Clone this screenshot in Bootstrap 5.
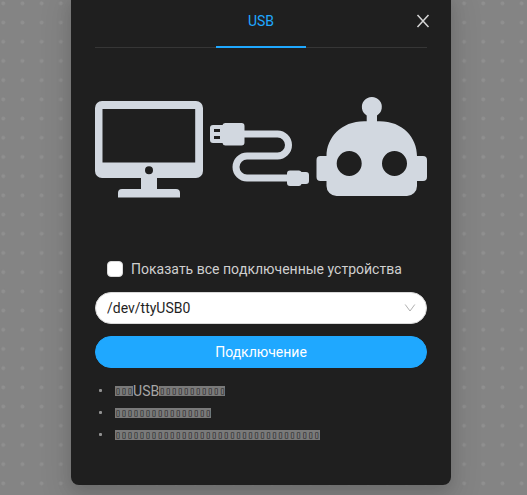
<!DOCTYPE html>
<html lang="ru">
<head>
<meta charset="utf-8">
<meta name="viewport" content="width=device-width, initial-scale=1">
<title>USB</title>
<link href="https://cdn.jsdelivr.net/npm/bootstrap@5.3.0/dist/css/bootstrap.min.css" rel="stylesheet">
<style>
body {
  font-family: Roboto, "Liberation Sans", sans-serif;
  font-size: 14px;
  line-height: 22px;
  text-rendering: optimizeSpeed;
  font-kerning: none;
  color: #cfcfcf;
  background: #848484 url("data:image/svg+xml,%3Csvg xmlns='http://www.w3.org/2000/svg' viewBox='0 0 5 5'%3E%3Cdefs%3E%3Cpattern id='p' width='1' height='1' patternUnits='userSpaceOnUse'%3E%3Ccircle cx='.17' cy='.17' r='.1' fill='%238f8f8f'/%3E%3C/pattern%3E%3C/defs%3E%3Crect width='5' height='5' fill='url(%23p)'/%3E%3C/svg%3E") 0 0 / 96px 96px;
}
.stage { padding-right: 5px; overflow: hidden; min-height: 100vh; }
.dialog-box {
  max-width: 380px;
  margin-top: -7px;
  margin-bottom: 10px;
  padding: 0 24px 39px;
  background: #1f1f1f;
  border-radius: 8px;
  box-shadow: 0 6px 16px rgba(0,0,0,.12), 0 9px 28px 8px rgba(0,0,0,.08);
}
.tab-bar { border-bottom: 1px solid #363636; }
.tab-bar .nav-link {
  padding: 17px 32px 14px;
  margin-bottom: -1px;
  border: 0;
  border-bottom: 2px solid #1fa8ff;
  border-radius: 0;
  background: transparent;
  color: #1fa8ff;
}
.close-btn { top: 19px; right: 20px; line-height: 0; color: #d6d6d6; }
.art { margin-top: 42px; fill: #d2d8e0; }
.options { margin-top: 53px; gap: 12px; }
.form-check-input.show-all { width: 16px; height: 16px; border: 1px solid #d9d9d9; border-radius: 4px; background-color: #fff; }
.port-select {
  height: 32px;
  padding: 0 32px 0 11px;
  border: 1px solid #d9d9d9;
  font-size: 14px;
  color: #1f1f1f;
  background: #fff url("data:image/svg+xml,%3Csvg xmlns='http://www.w3.org/2000/svg' viewBox='0 0 12 12' fill='none' stroke='%23b0b0b0'%3E%3Cpath d='M1.2 2.5 6 9 10.800 2.500'/%3E%3C/svg%3E") no-repeat right 10px center / 12px 12px;
}
.connect-btn {
  --bs-btn-bg: #1fa8ff; --bs-btn-border-color: #1fa8ff;
  height: 32px;
  padding: 0;
  font-size: 14px;
}
.hints { margin-top: 12px; color: #a6a6a6; }
.hints li { display: flex; gap: 13px; min-height: 22px; }
.hints li::before { content: ""; width: 3px; height: 3px; margin: 9px 0 0 4px; border-radius: 1px; background: #929292; }
.boxes {
  font: 10px/10px "DejaVu Sans Mono", monospace;
  color: #1f1f1f;
  background: #7a7a7a;
}
</style>
<script src="https://cdn.jsdelivr.net/npm/bootstrap@5.3.0/dist/js/bootstrap.bundle.min.js"></script>
</head>
<body>
<div class="stage">
  <main class="dialog-box position-relative mx-auto">
    <div class="tab-bar nav justify-content-center" role="tablist">
      <button class="nav-link active" type="button" role="tab" aria-selected="true">USB</button>
    </div>
    <button class="close-btn btn p-0 border-0 position-absolute" type="button" aria-label="Закрыть">
      <svg width="16" height="18" viewBox="0 0 16 18" fill="none" stroke="currentColor" stroke-width="1.5"><path d="M2.500 3 13.500 15M13.500 3 2.500 15"/></svg>
    </button>

    <svg class="art d-block w-100" viewBox="95 90 332 115" aria-hidden="true">
      <path fill-rule="evenodd" d="M102 101H196a7 7 0 0 1 7 7V171a7 7 0 0 1-7 7H157V189H176a4 4 0 0 1 4 4V197.500H118V193a4 4 0 0 1 4-4H141V178H102a7 7 0 0 1-7-7V108a7 7 0 0 1 7-7ZM102.500 109V162.500H195.200V109ZM149 166.300a4 4 0 1 0 0 8a4 4 0 1 0 0-8Z"/>
      <path fill-rule="evenodd" d="M213 125H222.500a3 3 0 0 1 3-2H241.500a3 3 0 0 1 3 3V142.500a3 3 0 0 1-3 3H225.500a3 3 0 0 1-3-2.500H213a3 3 0 0 1-3-3V128a3 3 0 0 1 3-3ZM214 129V132H220V129ZM214 136V139H220V136Z"/>
      <path fill="none" stroke="#d2d8e0" stroke-width="7" d="M243 134H277.500a11 11 0 0 1 0 22H247a11 11 0 0 0 0 22H288"/>
      <path d="M290 170.500H299a3 3 0 0 1 2.500 1.500H306a3 3 0 0 1 3 3V181a3 3 0 0 1-3 3H301.500a3 3 0 0 1-2.500 2H290a3 3 0 0 1-3-3V173.500a3 3 0 0 1 3-3Z"/>
      <path fill-rule="evenodd" d="M366.700 121.200V115.500A10 10 0 1 1 377 115.500V121.200C402 120 417 137 417 156H423a4 4 0 0 1 4 4V177a4 4 0 0 1-4 4H417V186a10 10 0 0 1-10 10H336.500a10 10 0 0 1-10-10V181H320.500a4 4 0 0 1-4-4V160a4 4 0 0 1 4-4H326.500C326.500 137 342 120 366.700 121.200ZM349.200 151a12.500 12.500 0 1 0 0 25a12.500 12.500 0 1 0 0-25ZM394.500 151a12.500 12.500 0 1 0 0 25a12.500 12.500 0 1 0 0-25Z"/>
    </svg>

    <form class="options d-flex flex-column" onsubmit="return false">
      <div class="d-flex align-items-center gap-2 ps-2 ms-1">
        <input class="form-check-input show-all m-0" type="checkbox" id="showAll">
        <label for="showAll">Показать все подключенные устройства</label>
      </div>
      <div class="d-grid gap-2">
        <select class="port-select form-select rounded-pill" aria-label="Порт">
          <option>/dev/ttyUSB0</option>
        </select>
        <button class="connect-btn btn btn-primary rounded-pill mt-1" type="submit">Подключение</button>
      </div>
    </form>

    <ul class="hints list-unstyled mb-0">
      <li><div class="d-flex align-items-center"><span class="boxes">▯▯▯</span>USB<span class="boxes">▯▯▯▯▯▯▯▯▯▯▯</span></div></li>
      <li><div class="d-flex align-items-center"><span class="boxes">▯▯▯▯▯▯▯▯▯▯▯▯▯▯▯▯</span></div></li>
      <li><div class="d-flex align-items-center"><span class="boxes">▯▯▯▯▯▯▯▯▯▯▯▯▯▯▯▯▯▯▯▯▯▯▯▯▯▯▯▯▯▯▯▯▯▯</span></div></li>
    </ul>
  </main>
</div>
</body>
</html>
